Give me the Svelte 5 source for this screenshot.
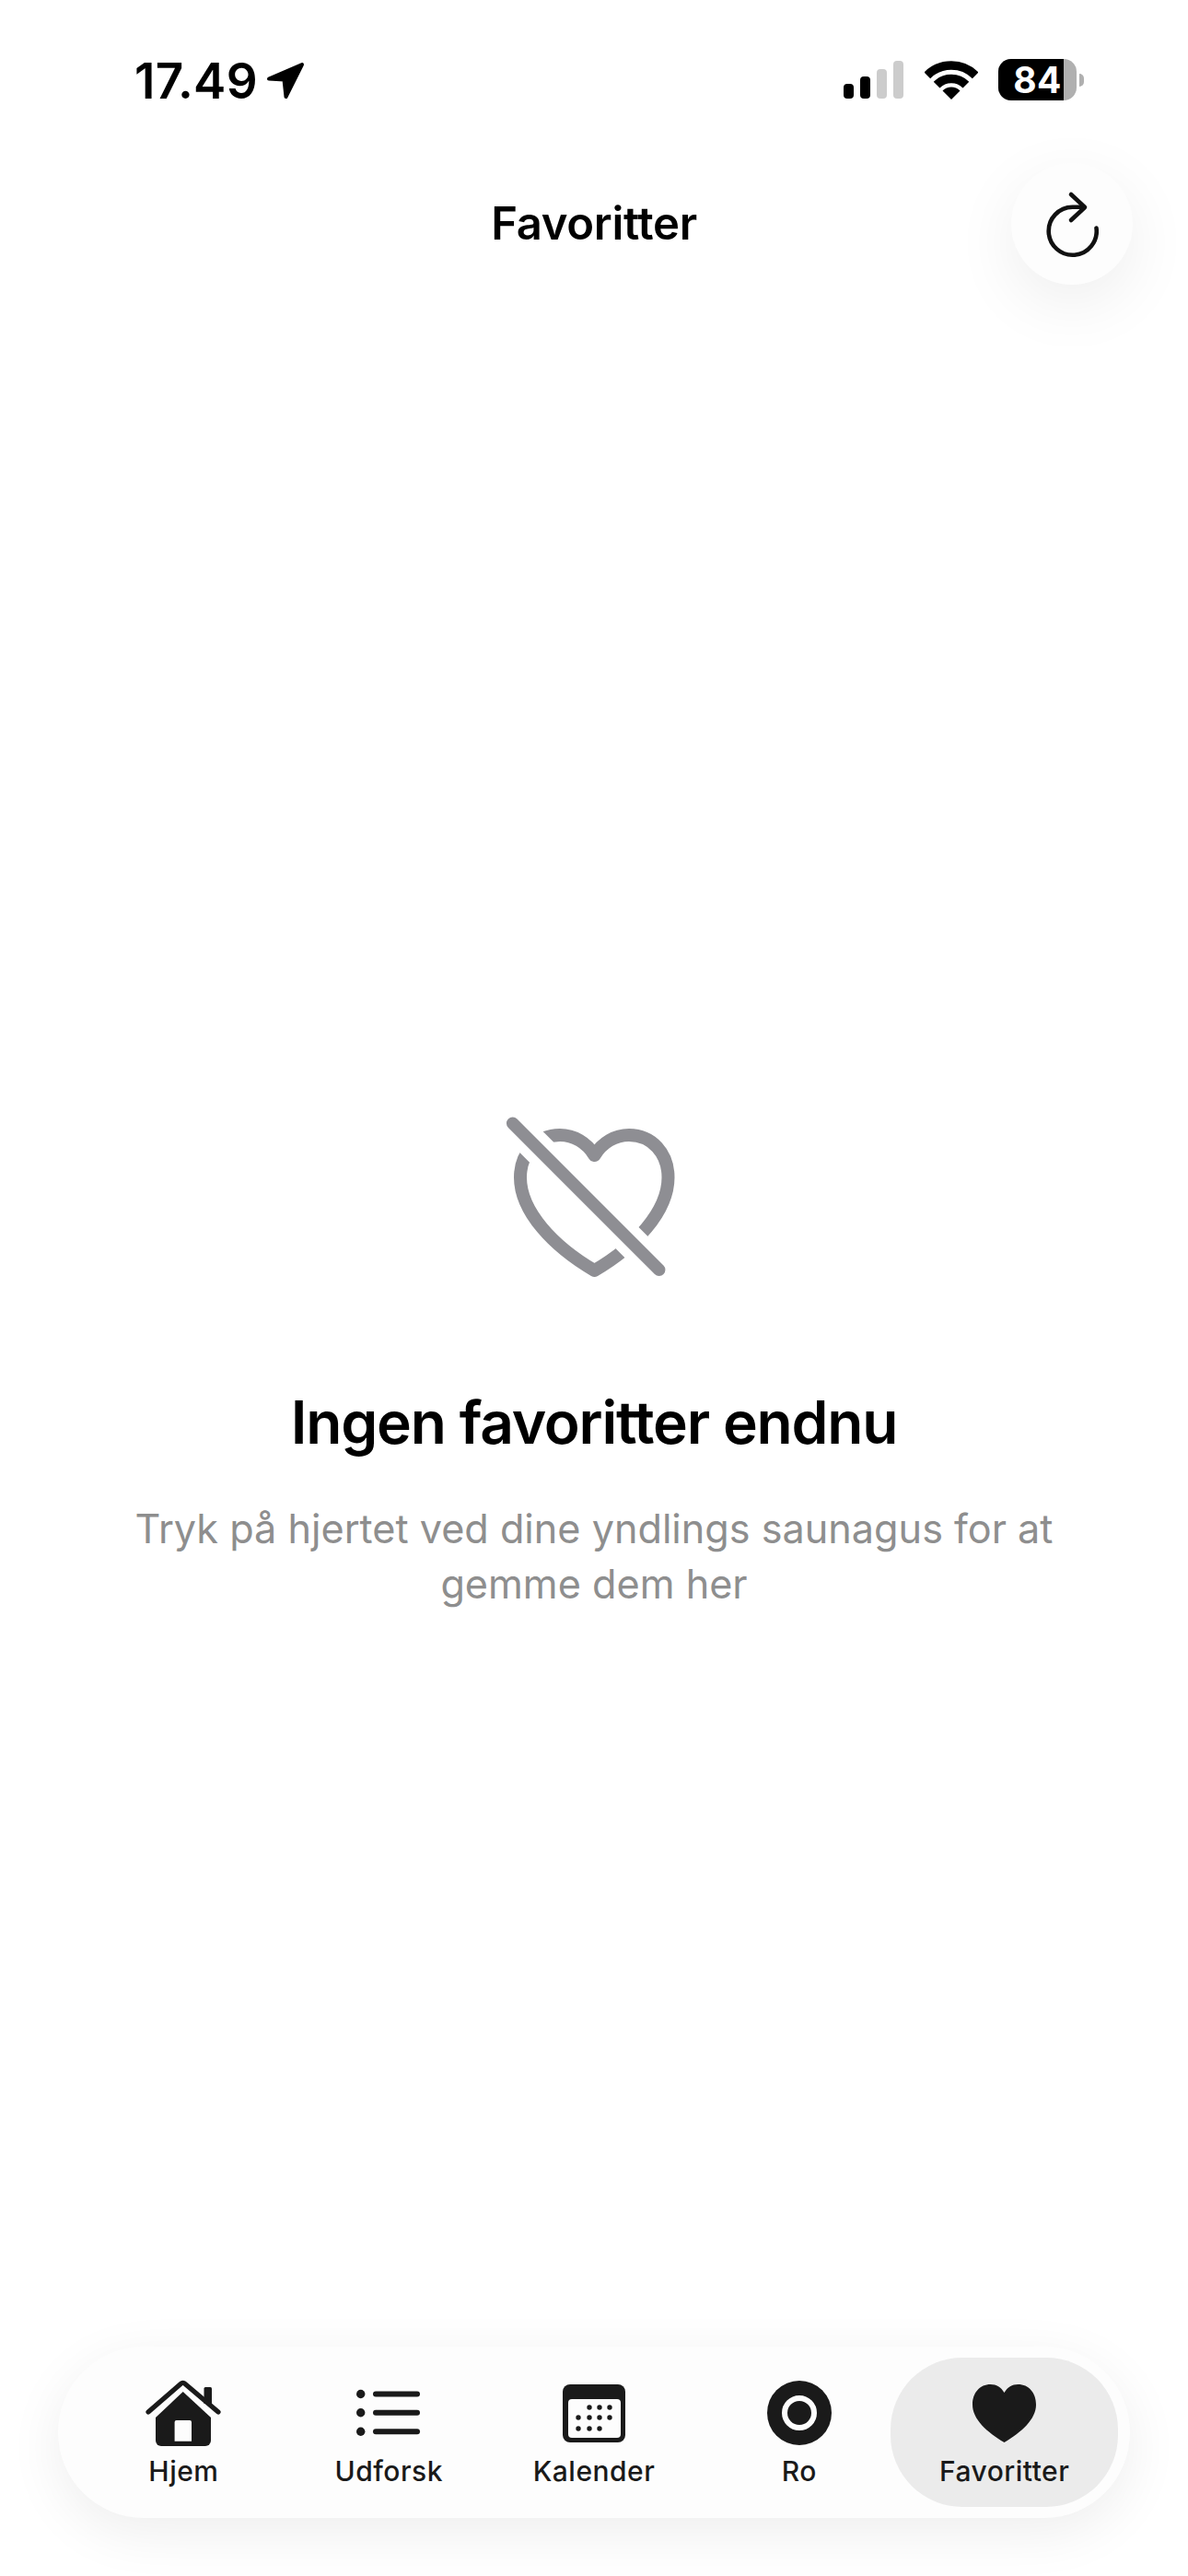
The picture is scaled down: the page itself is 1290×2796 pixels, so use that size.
<script>
  const tabs = [
    { id: 'home', label: 'Hjem' },
    { id: 'list', label: 'Udforsk' },
    { id: 'cal', label: 'Kalender' },
    { id: 'ro', label: 'Ro' },
    { id: 'fav', label: 'Favoritter', active: true }
  ]
  const bars = [
    { h: 16, on: true },
    { h: 24, on: true },
    { h: 32, on: false },
    { h: 41, on: false }
  ]
  const calRows = [
    [29, 40, 51],
    [17, 29, 40, 51],
    [17, 29, 40]
  ]
</script>

<div class="page">
  <div class="status">
    <div class="time">
      <span class="clock">17.49</span>
      <svg width="42" height="42" viewBox="0 0 42 42">
        <path d="M3 19.5 39 4 21.5 39 19.5 20.5Z" fill="#000" stroke="#000" stroke-width="4" stroke-linejoin="round" />
      </svg>
    </div>
    <div class="status-right">
      <div class="signal">
        {#each bars as b}
          <span class="bar" class:on={b.on} style="height: {b.h}px"></span>
        {/each}
      </div>
      <svg class="wifi" width="58" height="42" viewBox="0 0 58 42">
        <path d="M2.8 15.8A37 37 0 0 1 55.2 15.8" fill="none" stroke="#000" stroke-width="9.5" />
        <path d="M13.1 26.1A22.5 22.5 0 0 1 44.9 26.1" fill="none" stroke="#000" stroke-width="9.5" />
        <path d="M29 42 19.5 32.5A13.4 13.4 0 0 1 38.5 32.5Z" fill="#000" />
      </svg>
      <div class="battery">
        <div class="battery-body">
          <div class="battery-fill">84</div>
        </div>
        <span class="battery-cap"></span>
      </div>
    </div>
  </div>

  <header class="header">
    <span></span>
    <h1>Favoritter</h1>
    <button class="refresh" aria-label="Opdater">
      <svg width="132" height="132" viewBox="0 0 132 132" fill="none" stroke="#111" stroke-width="4.6" stroke-linecap="round" stroke-linejoin="round">
        <path d="M92.5 70.5A26 26 0 1 1 66.5 47.8H79" />
        <path d="M65 34 80 48 65 62" />
      </svg>
    </button>
  </header>

  <main class="empty">
    <svg width="250" height="210" viewBox="0 0 250 210" fill="none">
      <path d="M125.5 64C134 50 148 42 163 42C188 42 205.5 62 205.5 88C205.5 125 170 163 125.5 189C81 163 45 125 45 88C45 62 63 42 88 42C103 42 117 50 125.5 64Z" stroke="#8e8e93" stroke-width="14" stroke-linejoin="round" />
      <path d="M20 12.6 212 204.6" stroke="#fff" stroke-width="34" />
      <path d="M36.7 29.3 195.7 188.3" stroke="#8e8e93" stroke-width="13.5" stroke-linecap="round" />
    </svg>
    <h2>Ingen favoritter endnu</h2>
    <p>Tryk på hjertet ved dine yndlings saunagus for at<br />gemme dem her</p>
  </main>

  <nav class="tabbar">
    {#each tabs as t}
      <div class="tab" class:active={t.active}>
        <div class="tab-icon">
          {#if t.id === 'home'}
            <svg width="82" height="72" viewBox="0 0 82 72" fill="#1a1a1a">
              <path d="M63.5 9.5a1.5 1.5 0 0 1 1.5-1.5h5.5a1.5 1.5 0 0 1 1.5 1.5V26h-8.5Z" />
              <path d="M3 35 38.5 4.2a3 3 0 0 1 4.2 0L79 35" fill="none" stroke="#1a1a1a" stroke-width="5.2" stroke-linecap="round" stroke-linejoin="round" />
              <path d="M40.7 13 71 41V66a6 6 0 0 1-6 6H17a6 6 0 0 1-6-6V41Z" />
              <path d="M31.6 46a2 2 0 0 1 2-2H48a2 2 0 0 1 2 2V66.7H31.6Z" fill="#fdfdfd" />
            </svg>
          {:else if t.id === 'list'}
            <svg width="70" height="52" viewBox="0 0 70 52" fill="#1a1a1a">
              {#each [5.5, 25.7, 46.3] as y}
                <circle cx="4.7" cy={y} r="4.7" />
                <path d="M21 {y}H66" stroke="#1a1a1a" stroke-width="6" stroke-linecap="round" />
              {/each}
            </svg>
          {:else if t.id === 'cal'}
            <svg width="68" height="63" viewBox="0 0 68 63">
              <rect width="68" height="63" rx="8" fill="#1a1a1a" />
              <rect x="6" y="16" width="57" height="42" rx="4" fill="#fdfdfd" />
              {#each calRows as row, i}
                {#each row as x}
                  <circle cx={x} cy={[25, 36, 48][i]} r="2.7" fill="#1a1a1a" />
                {/each}
              {/each}
            </svg>
          {:else if t.id === 'ro'}
            <svg width="70" height="70" viewBox="0 0 70 70">
              <circle cx="35" cy="35" r="35" fill="#1a1a1a" />
              <circle cx="35" cy="35" r="16" fill="none" stroke="#fdfdfd" stroke-width="6" />
            </svg>
          {:else}
            <svg width="69" height="63" viewBox="0 0 69 63">
              <path d="M34.5 9C31 3 26 0 19.5 0C8 0 0 9 0 22C0 38 16 52 34.5 63C53 52 69 38 69 22C69 9 61 0 49.5 0C43 0 38 3 34.5 9Z" fill="#1a1a1a" />
            </svg>
          {/if}
        </div>
        <span class="tab-label">{t.label}</span>
      </div>
    {/each}
  </nav>
</div>

<style>
  :global(body) {
    margin: 0;
    background: #fff;
  }

  .page {
    width: 1290px;
    height: 2796px;
    display: flex;
    flex-direction: column;
    background: #fff;
    font-family: Inter, 'Liberation Sans', sans-serif;
    overflow: hidden;
  }

  .status {
    display: flex;
    justify-content: space-between;
    align-items: center;
    height: 45px;
    padding: 64px 113px 0 146px;
  }

  .time {
    display: flex;
    align-items: center;
    gap: 9px;
    font-size: 53px;
    font-weight: 600;
    letter-spacing: 0.3px;
    line-height: 45px;
    color: #000;
  }

  .clock {
    padding-top: 4px;
  }

  .status-right {
    display: flex;
    align-items: center;
  }

  .signal {
    display: flex;
    align-items: flex-end;
    gap: 7px;
    height: 41px;
    margin-right: 23px;
  }

  .bar {
    width: 11px;
    border-radius: 4px;
    background: #ccc;
  }

  .bar.on {
    background: #000;
  }

  .wifi {
    margin-right: 22px;
  }

  .battery {
    display: flex;
    align-items: center;
  }

  .battery-body {
    width: 85px;
    height: 45px;
    border-radius: 14px;
    background: #b0b0b0;
    overflow: hidden;
  }

  .battery-fill {
    width: 71px;
    height: 45px;
    background: #000;
    color: #fff;
    font-size: 39px;
    font-weight: 700;
    line-height: 45px;
    letter-spacing: 0.5px;
    text-align: right;
    padding-right: 2px;
    box-sizing: border-box;
  }

  .battery-cap {
    width: 5px;
    height: 14px;
    margin-left: 3px;
    border-radius: 0 5px 5px 0;
    background: #b0b0b0;
  }

  .header {
    display: grid;
    grid-template-columns: 1fr auto 1fr;
    align-items: center;
    margin-top: 68px;
    padding: 0 60px;
  }

  h1 {
    margin: 0;
    font-size: 49px;
    font-weight: 600;
    letter-spacing: -0.3px;
    line-height: 56px;
    color: #000;
  }

  .refresh {
    justify-self: end;
    width: 132px;
    height: 132px;
    padding: 0;
    border: 0;
    border-radius: 50%;
    background: #fdfdfd;
    box-shadow: 0 20px 70px rgba(0, 0, 0, 0.07);
  }

  .refresh svg {
    display: block;
  }

  .empty {
    flex: 1;
    display: flex;
    flex-direction: column;
    align-items: center;
    padding-top: 881px;
    text-align: center;
  }

  h2 {
    margin: 106px 0 0;
    font-size: 64px;
    font-weight: 600;
    line-height: 76px;
    letter-spacing: -1.2px;
    color: #000;
  }

  p {
    margin: 47px 0 0;
    font-size: 43.2px;
    line-height: 60px;
    color: #8e8e8e;
  }

  .tabbar {
    display: grid;
    grid-template-columns: repeat(5, 1fr);
    margin: 0 63px 63px;
    padding: 12px 25px;
    height: 186px;
    box-sizing: border-box;
    border-radius: 93px;
    background: #fdfdfd;
    box-shadow: 0 16px 60px rgba(0, 0, 0, 0.07);
  }

  .tab {
    display: flex;
    flex-direction: column;
    align-items: center;
    padding-top: 24px;
    border-radius: 78px;
    color: #1a1a1a;
  }

  .tab.active {
    margin: 0 -12px;
    background: #ebebeb;
  }

  .tab-icon {
    display: flex;
    align-items: center;
    justify-content: center;
    height: 72px;
  }

  .tab-label {
    margin-top: 9px;
    font-size: 30px;
    font-weight: 500;
    line-height: 36px;
    letter-spacing: 0.5px;
  }
</style>
